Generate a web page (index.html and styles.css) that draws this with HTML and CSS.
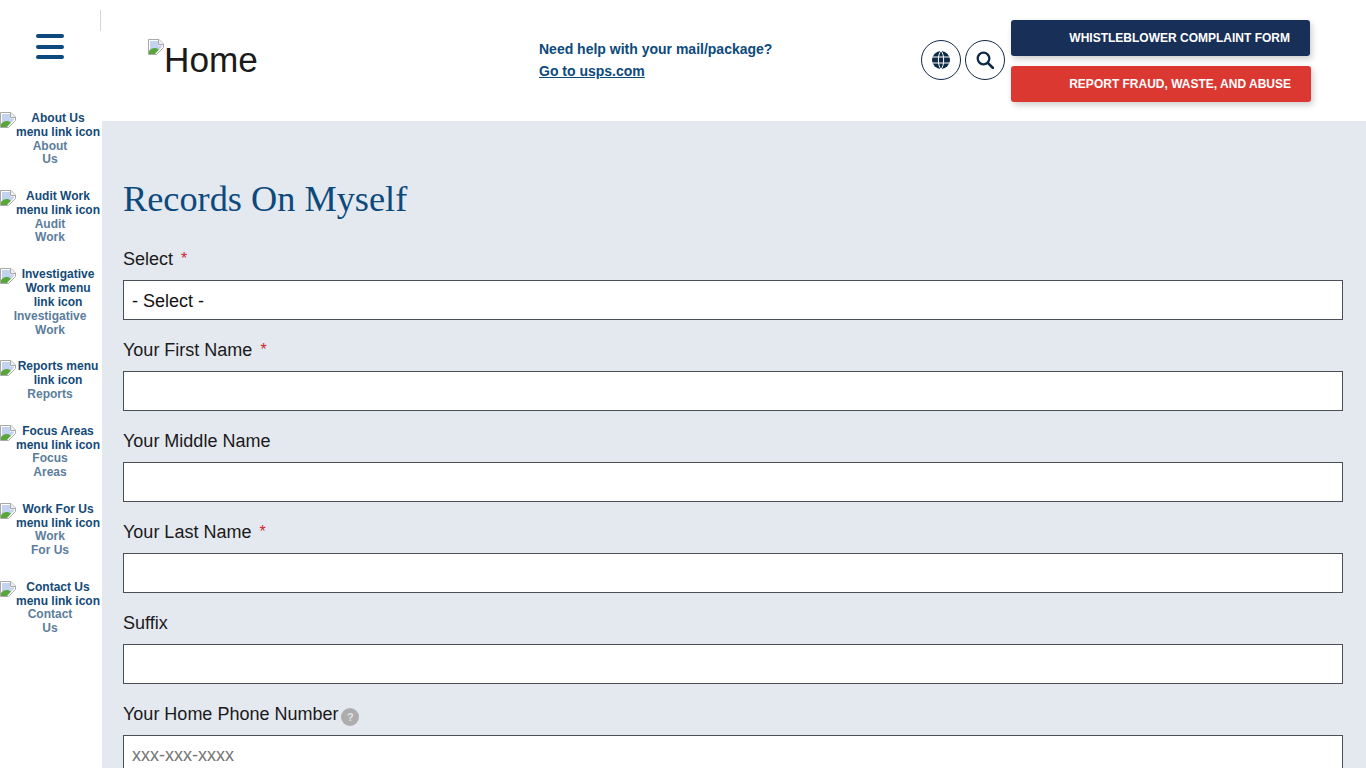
FILE: index.html
```html
<!DOCTYPE html>
<html lang="en">
<head>
<meta charset="utf-8">
<title>Records On Myself</title>
<link rel="stylesheet" href="styles.css">
</head>
<body>
<svg class="defs" width="0" height="0" aria-hidden="true">
  <symbol id="broken" viewBox="0 0 16 16">
    <path d="M.5.5H11L15.500 5V8.500L8.500 15.500H.5Z" fill="#fff" stroke="#a8a8a8"/>
    <path d="M2 2H10V6.500H14V8L7.500 14H2Z" fill="#c3d2ee"/>
    <path d="M10.500.5V5.500H15.500" fill="#f0f0f0" stroke="#a8a8a8"/>
    <path d="M1 15V12C3 9.500 6 8.500 9 9.500L11 10.500 7 15Z" fill="#5aa63a"/>
  </symbol>
</svg>
<div class="page">
  <aside class="sidebar">
    <div class="burger-cell">
      <button class="burger" aria-label="Menu"><span></span><span></span><span></span></button>
    </div>
    <nav class="menu">
      <a class="item"><span class="pic"><svg class="broken"><use href="#broken"/></svg><span class="alt">About Us menu link icon</span></span><span class="label">About<br>Us</span></a>
      <a class="item"><span class="pic"><svg class="broken"><use href="#broken"/></svg><span class="alt">Audit Work menu link icon</span></span><span class="label">Audit<br>Work</span></a>
      <a class="item"><span class="pic"><svg class="broken"><use href="#broken"/></svg><span class="alt">Investigative Work menu link icon</span></span><span class="label">Investigative<br>Work</span></a>
      <a class="item"><span class="pic"><svg class="broken"><use href="#broken"/></svg><span class="alt">Reports menu link icon</span></span><span class="label">Reports</span></a>
      <a class="item"><span class="pic"><svg class="broken"><use href="#broken"/></svg><span class="alt">Focus Areas menu link icon</span></span><span class="label">Focus<br>Areas</span></a>
      <a class="item"><span class="pic"><svg class="broken"><use href="#broken"/></svg><span class="alt">Work For Us menu link icon</span></span><span class="label">Work<br>For Us</span></a>
      <a class="item"><span class="pic"><svg class="broken"><use href="#broken"/></svg><span class="alt">Contact Us menu link icon</span></span><span class="label">Contact<br>Us</span></a>
    </nav>
  </aside>
  <div class="main">
    <header class="header">
      <a class="logo"><svg class="broken"><use href="#broken"/></svg><span class="logo-text">Home</span></a>
      <div class="help">
        <div>Need help with your mail/package?</div>
        <a class="help-link">Go to usps.com</a>
      </div>
      <div class="round-icons">
        <button class="round" aria-label="Language">
          <svg viewBox="0 0 18 18" width="18" height="18"><circle cx="9" cy="9" r="9" fill="#0f2a47"/><path d="M9 0C5.500 3 5.500 15 9 18M9 0C12.500 3 12.500 15 9 18M0 6H18M0 12H18" fill="none" stroke="#fff" stroke-width="1"/></svg>
        </button>
        <button class="round" aria-label="Search">
          <svg viewBox="0 0 18 18" width="18" height="18"><circle cx="7.500" cy="7.500" r="5.800" fill="none" stroke="#0f2a47" stroke-width="2.300"/><path d="M11.800 11.800 17 17" stroke="#0f2a47" stroke-width="2.600" stroke-linecap="round"/></svg>
        </button>
      </div>
      <div class="cta">
        <a class="btn navy">WHISTLEBLOWER COMPLAINT FORM</a>
        <a class="btn red">REPORT FRAUD, WASTE, AND ABUSE</a>
      </div>
    </header>
    <main class="content">
      <h1>Records On Myself</h1>
      <form class="form">
        <div class="field"><label>Select <i>*</i></label><div class="box select">- Select -</div></div>
        <div class="field"><label>Your First Name <i>*</i></label><div class="box"></div></div>
        <div class="field"><label>Your Middle Name</label><div class="box"></div></div>
        <div class="field"><label>Your Last Name <i>*</i></label><div class="box"></div></div>
        <div class="field"><label>Suffix</label><div class="box"></div></div>
        <div class="field"><label>Your Home Phone Number<b class="hint">?</b></label><div class="box ph">xxx-xxx-xxxx</div></div>
      </form>
    </main>
  </div>
</div>
</body>
</html>
```
FILE: styles.css
```css
html, body { margin: 0; padding: 0; height: 100%; overflow: hidden; background: #fff; }
body { font-family: "Liberation Sans", Arial, sans-serif; color: #1a1a1a; }
.defs { position: absolute; }
.page { display: flex; height: 768px; }
.sidebar { width: 102px; flex: none; background: #fff; }
.burger-cell { position: relative; height: 111.1px; display: flex; justify-content: center; box-sizing: border-box; padding-top: 34px; padding-right: 2px; }
.burger-cell::after { content: ""; position: absolute; left: 100px; top: 10px; width: 1px; height: 21px; background: #d4d7db; }
.burger { width: 28px; height: 25px; padding: 0; border: 0; background: none; display: flex; flex-direction: column; justify-content: space-between; }
.burger span { display: block; height: 4px; border-radius: 2px; background: #0c4a7d; }
.menu { display: flex; flex-direction: column; }
.item { display: block; width: 100px; font-size: 12px; font-weight: 700; margin-bottom: 22px; text-align: center; }
.pic { display: flex; align-items: flex-start; color: #134a78; line-height: 14px; }
.broken { width: 16px; height: 16px; flex: none; }
.pic .broken { margin-top: 1px; }
.alt { flex: 1; }
.label { display: block; padding-top: 0.5px; color: #5b7d9c; line-height: 13.8px; }
.main { flex: 1; min-width: 0; display: flex; flex-direction: column; }
.header { height: 121px; flex: none; display: flex; align-items: center; background: #fff; box-sizing: border-box; padding-left: 45px; border-left: 1px solid transparent; }
.logo { display: flex; align-items: flex-start; width: 391px; font-size: 35.2px; line-height: 40px; height: 40px; margin-bottom: 3px; }
.logo-text { padding-top: 1px; }
.help { width: 382px; margin-bottom: 2px; font-size: 14px; font-weight: 700; color: #0c4a7d; line-height: 22px; }
.help-link { text-decoration: underline; }
.round-icons { display: flex; gap: 4px; width: 90px; margin-bottom: 1px; }
.round { width: 40px; height: 40px; padding: 0; border: 1px solid #0f2a47; border-radius: 50%; background: #fff; display: flex; align-items: center; justify-content: center; }
.cta { display: flex; flex-direction: column; gap: 10px; }
.btn { display: block; width: 299px; height: 36px; box-sizing: border-box; border-radius: 3px; color: #fff; font-size: 12px; font-weight: 700; line-height: 36px; text-align: right; padding-right: 20px; box-shadow: 2px 3px 6px rgba(0,0,0,.2); }
.navy { background: #182f57; }
.red { background: #dc3832; width: 300px; }
.content { flex: 1; background: #e4e8ef; padding: 60px 23px 0 21px; min-height: 0; }
h1 { margin: 0 0 30px; font-family: "Liberation Serif", "Times New Roman", serif; font-weight: 400; font-size: 36.3px; line-height: 36px; color: #0c4a7d; }
.form { display: flex; flex-direction: column; }
.field { height: 91px; }
label { display: block; box-sizing: border-box; padding-top: 2px; font-size: 18px; line-height: 21px; height: 33px; }
label i { color: #d0242b; font-style: normal; font-size: 16px; line-height: 0; margin-left: 3px; vertical-align: 1px; }
.box { height: 40px; box-sizing: border-box; border: 1px solid #4a4f57; background: #fff; padding: 0 8px; font-size: 18px; line-height: 40px; color: #111; }
.ph { color: #757575; line-height: 38px; }
.hint { display: inline-block; width: 18px; height: 18px; margin-left: 3px; border-radius: 50%; background: #adadad; color: #e2e2e2; font-size: 11px; line-height: 18px; text-align: center; vertical-align: -1px; }
```
